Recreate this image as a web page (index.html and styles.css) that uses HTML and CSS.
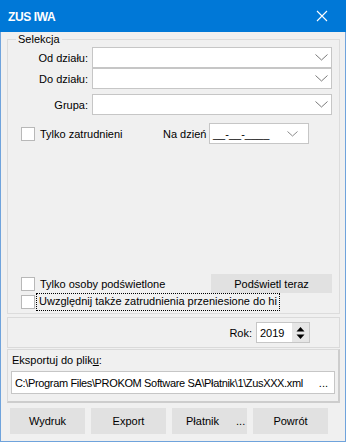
FILE: index.html
```html
<!DOCTYPE html>
<html lang="pl">
<head>
  <meta charset="UTF-8">
  <title>ZUS IWA</title>
  <link rel="stylesheet" href="styles.css">
</head>
<body>
  <div class="window">
    <div class="titlebar">
      <span class="title">ZUS IWA</span>
      <svg class="close" width="12" height="12" viewBox="0 0 12 12">
        <path d="M1 1L11 11M11 1L1 11" stroke="#fff" stroke-width="1.1" fill="none"/>
      </svg>
    </div>

    <div class="content">
      <fieldset class="group">
        <legend>Selekcja</legend>

        <div class="field">
          <label>Od działu:</label>
          <div class="combo">
            <svg width="13" height="7" viewBox="0 0 13 7"><path d="M0.5 0.5L6.5 6L12.5 0.5" stroke="#7a7a7a" fill="none"/></svg>
          </div>
        </div>
        <div class="field">
          <label>Do działu:</label>
          <div class="combo">
            <svg width="13" height="7" viewBox="0 0 13 7"><path d="M0.5 0.5L6.5 6L12.5 0.5" stroke="#7a7a7a" fill="none"/></svg>
          </div>
        </div>
        <div class="field gap">
          <label>Grupa:</label>
          <div class="combo">
            <svg width="13" height="7" viewBox="0 0 13 7"><path d="M0.5 0.5L6.5 6L12.5 0.5" stroke="#7a7a7a" fill="none"/></svg>
          </div>
        </div>

        <div class="date-row">
          <div class="opt"><span class="box"></span><span>Tylko zatrudnieni</span></div>
          <span class="date-label">Na dzień</span>
          <div class="date">
            <span class="mask">__-__-____</span>
            <svg width="11" height="6" viewBox="0 0 11 6"><path d="M0.5 0.5L5.5 5L10.5 0.5" stroke="#8a8a8a" fill="none"/></svg>
          </div>
        </div>

        <div class="light-row">
          <div class="opt"><span class="box"></span><span>Tylko osoby podświetlone</span></div>
          <button class="btn light">Podświetl teraz</button>
        </div>
        <div class="moved-row">
          <div class="opt"><span class="box"></span><span class="focus">Uwzględnij także zatrudnienia przeniesione do hi</span></div>
        </div>
      </fieldset>

      <div class="panel year">
        <span class="year-label">Rok:</span>
        <div class="spin">
          <span class="spin-value">2019</span>
          <div class="spin-btns">
            <svg width="9" height="14" viewBox="0 0 9 14">
              <path d="M4.5 1L8.5 5.5H0.5Z" fill="#000"/>
              <path d="M0.5 8.5H8.5L4.5 13Z" fill="#000"/>
            </svg>
          </div>
        </div>
      </div>

      <div class="panel export">
        <div class="export-label">Eksportuj do plik<u>u</u>:</div>
        <div class="path">
          <span class="path-text">C:\Program Files\PROKOM Software SA\Płatnik\1\ZusXXX.xml</span>
          <span class="dots">...</span>
        </div>
      </div>

      <div class="buttons">
        <button class="btn">Wydruk</button>
        <button class="btn">Export</button>
        <button class="btn left">Płatnik<span class="more">...</span></button>
        <button class="btn">Powrót</button>
      </div>
    </div>
  </div>
</body>
</html>
```

FILE: styles.css
```css
* {
  box-sizing: border-box;
}

html, body {
  margin: 0;
  padding: 0;
}

body {
  font-family: 'Liberation Sans', Arial, sans-serif;
  font-size: 11px;
  color: #000;
  background: #fff;
}

.window {
  width: 346px;
  height: 442px;
  display: flex;
  flex-direction: column;
}

.titlebar {
  height: 32px;
  background-color: #0078d7;
  color: #fff;
  display: flex;
  align-items: center;
  justify-content: space-between;
  padding: 0 18px 0 8px;
}

.title {
  font-weight: bold;
  font-size: 12px;
  letter-spacing: -0.4px;
  margin-top: 1px;
}

.content {
  flex: 1;
  background-color: #f0f0f0;
  border: 1px solid #6fa3dc;
  border-top: none;
}

/* ramka Selekcja */
.group {
  margin: 0 5px 0 6px;
  padding: 1px 7px 0 0;
  border: 1px solid #dcdcdc;
  height: 282px;
  min-width: 0;
}

.group legend {
  margin-left: 8px;
  padding: 0 2px;
  line-height: 14px;
  color: #000;
}

.field {
  display: flex;
  align-items: center;
  height: 21px;
}

.field.gap {
  margin-top: 5px;
}

.field label {
  width: 84px;
  padding-right: 4px;
  text-align: right;
}

.combo {
  flex: 1;
  height: 21px;
  background: #fff;
  border: 1px solid #c6c6c6;
  display: flex;
  align-items: center;
  justify-content: flex-end;
  padding-right: 3px;
}

.opt {
  display: flex;
  align-items: center;
  padding-left: 13px;
  white-space: nowrap;
}

.box {
  width: 14px;
  height: 14px;
  background: #fff;
  border: 1px solid #b8b8b8;
  margin-right: 5px;
  flex: none;
}

.date-row {
  display: flex;
  align-items: center;
  height: 21px;
  margin-top: 8px;
}

.date-row .opt {
  width: 155px;
}

.date-label {
  width: 46px;
}

.date {
  width: 100px;
  height: 21px;
  background: #fff;
  border: 1px solid #c6c6c6;
  display: flex;
  align-items: center;
  justify-content: space-between;
  padding: 0 10px 0 3px;
}

.light-row {
  display: flex;
  align-items: center;
  justify-content: space-between;
  height: 19px;
  margin-top: 130px;
}

.moved-row {
  display: flex;
  align-items: center;
  height: 17px;
}

.moved-row .box {
  margin-right: 2px;
}

.focus {
  outline: 1px dotted #000;
  padding: 0 2px 1px 2px;
  line-height: 15px;
}

.btn {
  font-family: 'Liberation Sans', Arial, sans-serif;
  font-size: 11px;
  color: #000;
  background-color: #e1e1e1;
  border: none;
  padding: 0;
  margin: 0;
}

.btn.light {
  width: 121px;
  height: 19px;
}

.panel {
  margin: 3px 5px 0 6px;
  border: 1px solid #dadada;
}

.year {
  height: 31px;
  display: flex;
  align-items: center;
  justify-content: flex-end;
  padding-right: 29px;
}

.year-label {
  margin-right: 4px;
}

.spin {
  width: 54px;
  height: 21px;
  background: #fff;
  border: 1px solid #c6c6c6;
  display: flex;
  align-items: center;
  justify-content: space-between;
  padding-left: 3px;
}

.spin-btns {
  width: 17px;
  height: 19px;
  background: #e6e6e6;
  display: flex;
  align-items: center;
  justify-content: center;
}

.export {
  margin-top: 1px;
  height: 54px;
  padding: 4px 3px 0 3px;
  border-right: 2px solid #cdcdcd;
  border-bottom: 2px solid #cdcdcd;
}

.export-label {
  padding-left: 1px;
  height: 17px;
}

.path {
  height: 23px;
  background: #fff;
  border: 1px solid #c6c6c6;
  display: flex;
  align-items: center;
  justify-content: space-between;
  padding: 0 6px 0 3px;
  white-space: nowrap;
  overflow: hidden;
}

.path-text {
  letter-spacing: -0.35px;
}

.buttons {
  display: flex;
  gap: 6px;
  padding-left: 9px;
  margin-top: 5px;
}

.buttons .btn {
  width: 75px;
  height: 26px;
}

.btn.left {
  text-align: left;
  padding-left: 14px;
}

.more {
  margin-left: 17px;
}
```
